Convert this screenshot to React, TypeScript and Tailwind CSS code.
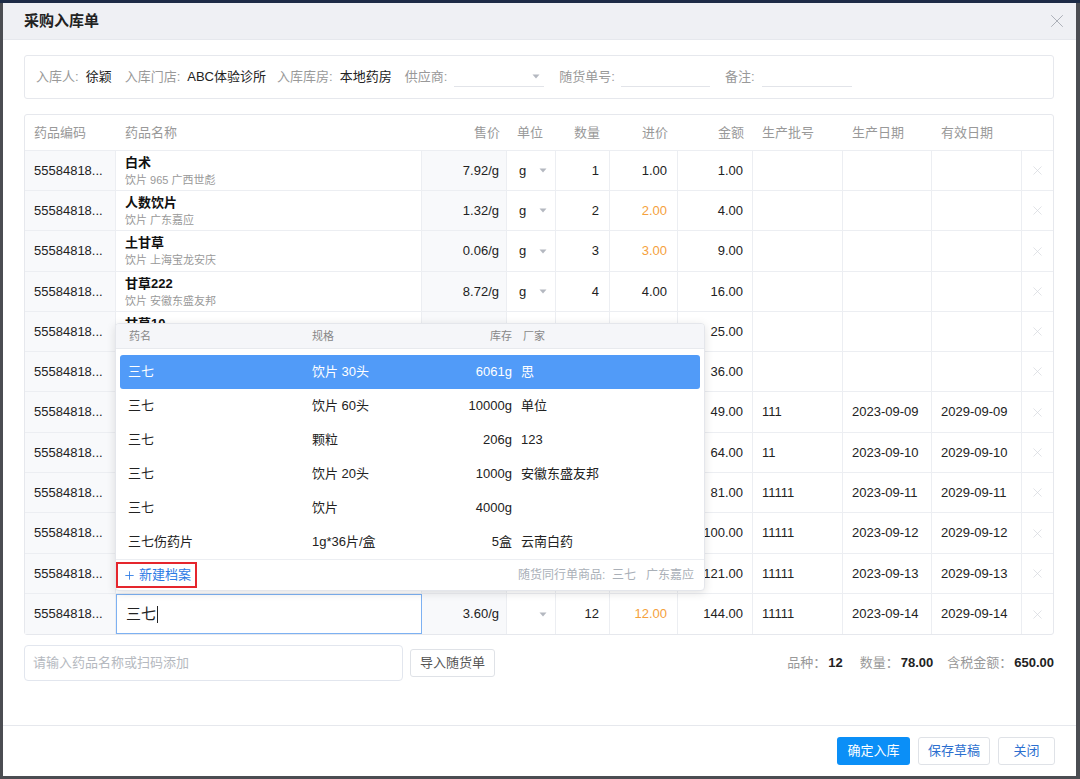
import { X, Plus } from "lucide-react";

const font = {
  fontFamily: '"Liberation Sans", "Noto Sans CJK SC", sans-serif',
};

const cols =
  "grid grid-cols-[91px_306px_85px_49px_54px_68px_75px_90px_89px_90px_31px]";

type Row = {
  code: string;
  name: string;
  sub: string;
  price: string;
  unit: string;
  qty: string;
  cost: string;
  costHot?: boolean;
  amount: string;
  batch?: string;
  made?: string;
  expire?: string;
};

const rows: Row[] = [
  { code: "55584818...", name: "白术", sub: "饮片 965 广西世彪", price: "7.92/g", unit: "g", qty: "1", cost: "1.00", amount: "1.00" },
  { code: "55584818...", name: "人数饮片", sub: "饮片 广东嘉应", price: "1.32/g", unit: "g", qty: "2", cost: "2.00", costHot: true, amount: "4.00" },
  { code: "55584818...", name: "土甘草", sub: "饮片 上海宝龙安庆", price: "0.06/g", unit: "g", qty: "3", cost: "3.00", costHot: true, amount: "9.00" },
  { code: "55584818...", name: "甘草222", sub: "饮片 安徽东盛友邦", price: "8.72/g", unit: "g", qty: "4", cost: "4.00", amount: "16.00" },
  { code: "55584818...", name: "甘草10", sub: "饮片 安徽东盛友邦", price: "0.50/g", unit: "g", qty: "5", cost: "5.00", amount: "25.00" },
  { code: "55584818...", name: "黄芪", sub: "饮片 广东嘉应", price: "1.20/g", unit: "g", qty: "6", cost: "6.00", amount: "36.00" },
  { code: "55584818...", name: "当归", sub: "饮片 广东嘉应", price: "1.50/g", unit: "g", qty: "7", cost: "7.00", amount: "49.00", batch: "111", made: "2023-09-09", expire: "2029-09-09" },
  { code: "55584818...", name: "党参", sub: "饮片 广东嘉应", price: "1.80/g", unit: "g", qty: "8", cost: "8.00", amount: "64.00", batch: "11", made: "2023-09-10", expire: "2029-09-10" },
  { code: "55584818...", name: "白芍", sub: "饮片 广东嘉应", price: "2.00/g", unit: "g", qty: "9", cost: "9.00", amount: "81.00", batch: "11111", made: "2023-09-11", expire: "2029-09-11" },
  { code: "55584818...", name: "川芎", sub: "饮片 广东嘉应", price: "2.50/g", unit: "g", qty: "10", cost: "10.00", amount: "100.00", batch: "11111", made: "2023-09-12", expire: "2029-09-12" },
  { code: "55584818...", name: "茯苓", sub: "饮片 广东嘉应", price: "3.00/g", unit: "g", qty: "11", cost: "11.00", amount: "121.00", batch: "11111", made: "2023-09-13", expire: "2029-09-13" },
];

// rows that are 1px taller, as in the screenshot
const tallRows = [2, 6, 9];

const options = [
  { name: "三七", spec: "饮片 30头", stock: "6061g", maker: "思" },
  { name: "三七", spec: "饮片 60头", stock: "10000g", maker: "单位" },
  { name: "三七", spec: "颗粒", stock: "206g", maker: "123" },
  { name: "三七", spec: "饮片 20头", stock: "1000g", maker: "安徽东盛友邦" },
  { name: "三七", spec: "饮片", stock: "4000g", maker: "" },
  { name: "三七伤药片", spec: "1g*36片/盒", stock: "5盒", maker: "云南白药" },
];

function Caret() {
  return (
    <svg width="8" height="5" viewBox="0 0 8 5" className="shrink-0">
      <path d="M0.5 0.5 L7.5 0.5 L4 4.5 Z" fill="#b4b8c0" />
    </svg>
  );
}

function Cell({
  children,
  className = "",
}: {
  children?: React.ReactNode;
  className?: string;
}) {
  return (
    <div
      className={`flex items-center border-r border-[#eceef2] text-[13px] text-[#222] ${className}`}
    >
      {children}
    </div>
  );
}

function RemoveCell() {
  return (
    <div className="flex items-center justify-center">
      <X size={15} strokeWidth={1.1} className="text-[#d3d6dc]" />
    </div>
  );
}

function TableRow({ row, tall }: { row: Row; tall: boolean }) {
  return (
    <div className={`${cols} ${tall ? "h-[41px]" : "h-[40px]"} border-b border-[#eceef2]`}>
      <Cell className="bg-[#f8f9fb] pl-[9px]">{row.code}</Cell>
      <Cell className="flex-col !items-start justify-center pl-[9px]">
        <div className="text-[13px] font-bold leading-[18px] text-[#111]">{row.name}</div>
        <div className="text-[11px] leading-[16px] text-[#999]">{row.sub}</div>
      </Cell>
      <Cell className="justify-end bg-[#f8f9fb] pr-[7px]">{row.price}</Cell>
      <Cell className="justify-between pl-[12px] pr-[8px]">
        <span>{row.unit}</span>
        <Caret />
      </Cell>
      <Cell className="justify-end pr-[10px]">{row.qty}</Cell>
      <Cell className={`justify-end pr-[10px] ${row.costHot ? "!text-[#f5a13c]" : ""}`}>
        {row.cost}
      </Cell>
      <Cell className="justify-end pr-[9px]">{row.amount}</Cell>
      <Cell className="pl-[9px]">{row.batch}</Cell>
      <Cell className="pl-[9px]">{row.made}</Cell>
      <Cell className="pl-[9px]">{row.expire}</Cell>
      <RemoveCell />
    </div>
  );
}

function Dropdown() {
  return (
    <div className="absolute left-[90px] top-[208px] z-10 w-[590px] overflow-hidden rounded-[4px] border border-[#e4e6eb] bg-white shadow-[0_2px_10px_rgba(0,0,0,0.12)]">
      <div className="grid h-[25px] grid-cols-[196px_144px_56px_1fr] items-center border-b border-[#e8eaee] bg-[#f5f6f9] text-[11px] text-[#888]">
        <span className="pl-[13px]">药名</span>
        <span>规格</span>
        <span className="text-right">库存</span>
        <span className="pl-[11px]">厂家</span>
      </div>
      <div className="px-[4px] pt-[6px]">
        {options.map((o, i) => (
          <div
            key={i}
            className={`grid h-[34px] grid-cols-[192px_144px_56px_1fr] items-center rounded-[3px] text-[13px] ${
              i === 0 ? "bg-[#519bf8] text-white" : "text-[#222]"
            }`}
          >
            <span className="pl-[8px]">{o.name}</span>
            <span>{o.spec}</span>
            <span className="text-right">{o.stock}</span>
            <span className="pl-[9px]">{o.maker}</span>
          </div>
        ))}
      </div>
      <div className="flex h-[31px] items-center justify-between border-t border-[#eceef2] pr-[10px]">
        <div className="flex h-[26px] items-center gap-[3px] border-2 border-[#e5262d] pl-[5px] pr-[4px] text-[13px] text-[#2c7be5]">
          <Plus size={13} strokeWidth={1.6} />
          <span>新建档案</span>
        </div>
        <div className="text-[12px] text-[#aab0b8]">
          随货同行单商品:&nbsp;&nbsp;三七&nbsp;&nbsp;&nbsp;广东嘉应
        </div>
      </div>
    </div>
  );
}

export default function App() {
  return (
    <div
      className="h-[779px] w-[1080px] overflow-hidden border-t-[3px] border-[#1d2b46] bg-[#4b4d52] pl-[3px] pr-[4px] pb-[3px]"
      style={font}
    >
      <div className="flex h-full flex-col bg-white">
        {/* header */}
        <div className="flex h-[37px] shrink-0 items-center justify-between border-b border-[#e6e8ed] bg-[#eff0f4] pl-[21px] pr-[8px]">
          <span className="text-[15px] font-bold text-[#222]">采购入库单</span>
          <X size={22} strokeWidth={1} className="text-[#a6abb3]" />
        </div>

        <div className="flex flex-1 flex-col pl-[21px] pr-[22px]">
          {/* info bar */}
          <div className="mt-[15px] flex h-[44px] items-center rounded-[3px] border border-[#e6e8ed] pl-[11px] text-[13px]">
            <span className="text-[#999]">入库人:</span>
            <span className="ml-[7px] text-[#222]">徐颖</span>
            <span className="ml-[13px] text-[#999]">入库门店:</span>
            <span className="ml-[7px] text-[#222]">ABC体验诊所</span>
            <span className="ml-[11px] text-[#999]">入库库房:</span>
            <span className="ml-[7px] text-[#222]">本地药房</span>
            <span className="ml-[13px] text-[#999]">供应商:</span>
            <div className="ml-[7px] flex h-[20px] w-[90px] items-center justify-end border-b border-[#e2e4e9] pr-[4px]">
              <Caret />
            </div>
            <span className="ml-[15px] text-[#999]">随货单号:</span>
            <div className="ml-[6px] h-[20px] w-[89px] border-b border-[#e2e4e9]" />
            <span className="ml-[15px] text-[#999]">备注:</span>
            <div className="ml-[7px] h-[20px] w-[90px] border-b border-[#e2e4e9]" />
          </div>

          {/* table */}
          <div className="relative mt-[15px] rounded-[3px] border border-[#e6e8ed]">
            <div className={`${cols} h-[36px] items-center border-b border-[#eceef2] text-[13px] text-[#999]`}>
              <span className="pl-[9px]">药品编码</span>
              <span className="pl-[9px]">药品名称</span>
              <span className="pr-[7px] text-right">售价</span>
              <span className="pl-[10px]">单位</span>
              <span className="pr-[10px] text-right">数量</span>
              <span className="pr-[10px] text-right">进价</span>
              <span className="pr-[9px] text-right">金额</span>
              <span className="pl-[9px]">生产批号</span>
              <span className="pl-[9px]">生产日期</span>
              <span className="pl-[9px]">有效日期</span>
              <span />
            </div>
            {rows.map((r, i) => (
              <TableRow key={i} row={r} tall={tallRows.includes(i)} />
            ))}
            {/* editing row */}
            <div className={`${cols} h-[40px]`}>
              <Cell className="bg-[#f8f9fb] pl-[9px]">55584818...</Cell>
              <div className="flex items-center border border-[#7db1f2] pl-[9px] text-[15px] text-[#222]">
                三七<span className="ml-[1px] inline-block h-[17px] w-px bg-[#222]" />
              </div>
              <Cell className="justify-end bg-[#f8f9fb] pr-[7px]">3.60/g</Cell>
              <Cell className="justify-end pr-[8px]">
                <Caret />
              </Cell>
              <Cell className="justify-end pr-[10px]">12</Cell>
              <Cell className="justify-end pr-[10px] !text-[#f5a13c]">12.00</Cell>
              <Cell className="justify-end pr-[9px]">144.00</Cell>
              <Cell className="pl-[9px]">11111</Cell>
              <Cell className="pl-[9px]">2023-09-14</Cell>
              <Cell className="pl-[9px]">2029-09-14</Cell>
              <RemoveCell />
            </div>
            <Dropdown />
          </div>

          {/* add row */}
          <div className="mt-[10px] flex items-start">
            <div className="flex h-[36px] w-[379px] items-center rounded-[4px] border border-[#e2e6ee] pl-[8px] text-[13px] text-[#b5b9c0]">
              请输入药品名称或扫码添加
            </div>
            <div className="ml-[7px] mt-[4px] flex h-[28px] w-[85px] items-center justify-center rounded-[3px] border border-[#dfe2e7] text-[13px] text-[#555]">
              导入随货单
            </div>
            <div className="ml-auto flex h-[36px] items-center text-[13px]">
              <span className="text-[#999]">品种：</span>
              <span className="ml-[2px] font-bold text-[#222]">12</span>
              <span className="ml-[17px] text-[#999]">数量：</span>
              <span className="ml-[2px] font-bold text-[#222]">78.00</span>
              <span className="ml-[14px] text-[#999]">含税金额：</span>
              <span className="ml-[2px] font-bold text-[#222]">650.00</span>
            </div>
          </div>
        </div>

        {/* footer */}
        <div className="flex h-[51px] shrink-0 items-center justify-end gap-[8px] border-t border-[#e6e8ed] pr-[21px]">
          <button className="flex h-[28px] w-[73px] items-center justify-center rounded-[3px] bg-[#0b8ff7] text-[13px] text-white">
            确定入库
          </button>
          <button className="flex h-[28px] w-[72px] items-center justify-center rounded-[3px] border border-[#dfe2e7] text-[13px] text-[#2c6fcf]">
            保存草稿
          </button>
          <button className="flex h-[28px] w-[57px] items-center justify-center rounded-[3px] border border-[#dfe2e7] text-[13px] text-[#2c6fcf]">
            关闭
          </button>
        </div>
      </div>
    </div>
  );
}
